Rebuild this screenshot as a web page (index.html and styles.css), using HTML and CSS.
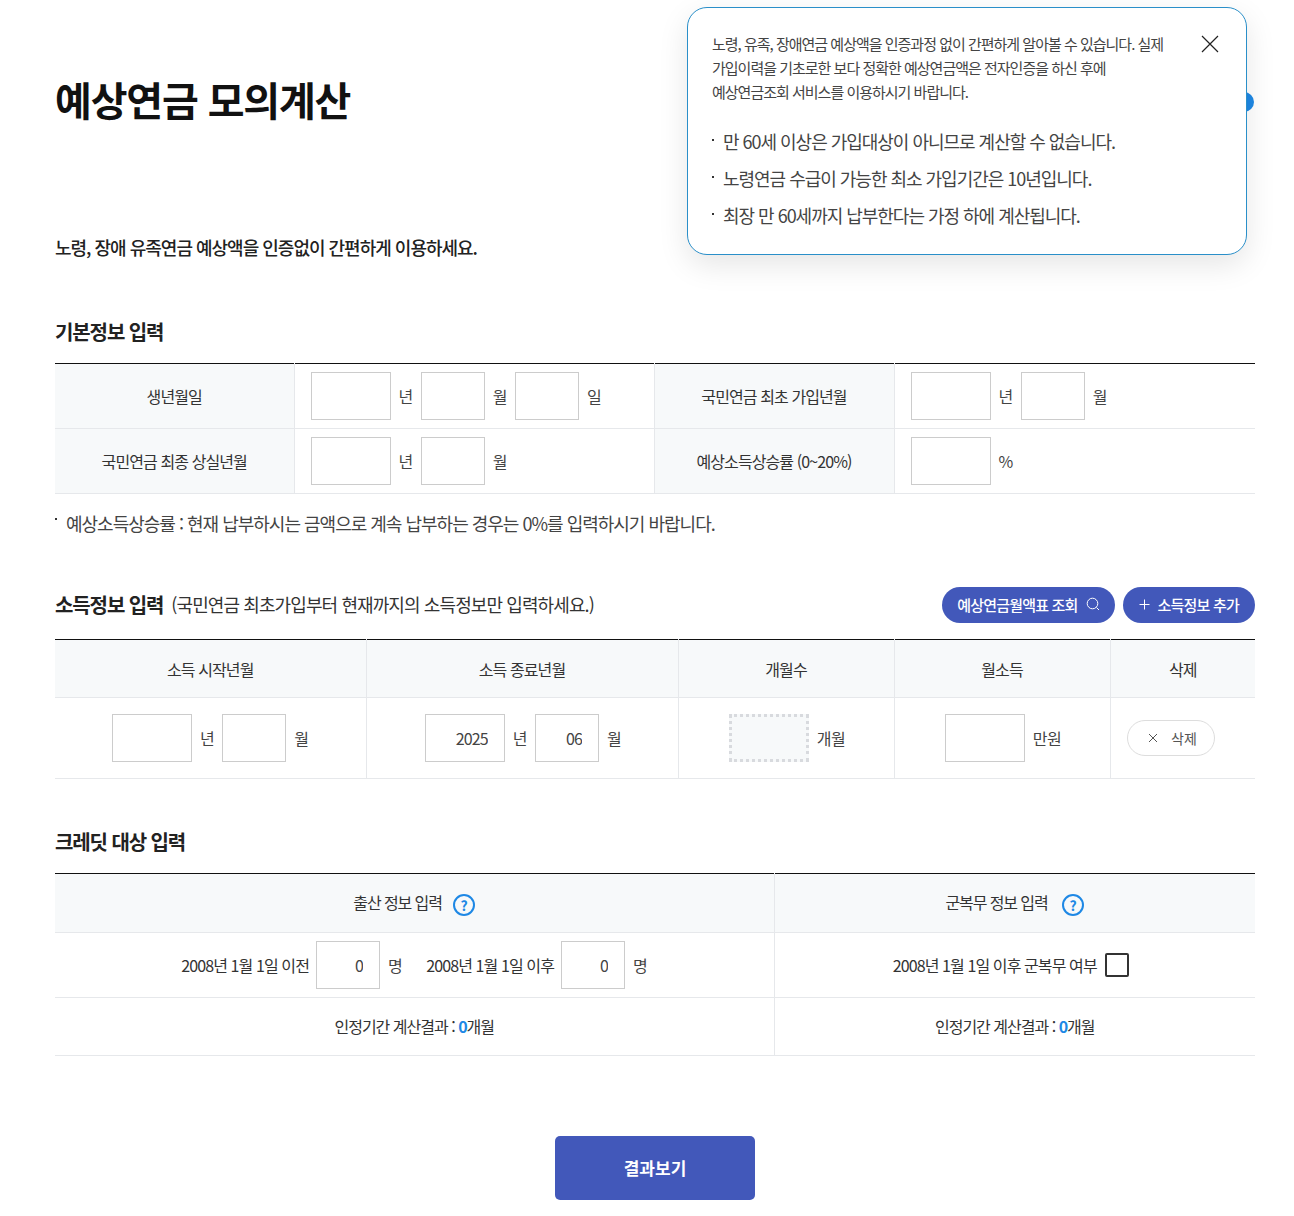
FILE: index.html
```html
<!DOCTYPE html>
<html lang="ko">
<head>
    <meta charset="UTF-8">
    <title>예상연금 모의계산</title>
    <link rel="stylesheet" href="styles.css">
</head>
<body>
    <div class="wrap">
        <h1>예상연금 모의계산</h1>
        <p class="lead">노령, 장애 유족연금 예상액을 인증없이 간편하게 이용하세요.</p>

        <!-- Popup -->
        <span class="popup-dot"></span>
        <div class="popup">
            <button class="popup-close" aria-label="닫기">
                <svg width="18" height="18" viewBox="0 0 18 18"><path d="M1 1L17 17M17 1L1 17" stroke="#222" stroke-width="1.2" fill="none"/></svg>
            </button>
            <p class="popup-text">노령, 유족, 장애연금 예상액을 인증과정 없이 간편하게 알아볼 수 있습니다. 실제<br>가입이력을 기초로한 보다 정확한 예상연금액은 전자인증을 하신 후에<br>예상연금조회 서비스를 이용하시기 바랍니다.</p>
            <ul class="popup-list">
                <li>만 60세 이상은 가입대상이 아니므로 계산할 수 없습니다.</li>
                <li>노령연금 수급이 가능한 최소 가입기간은 10년입니다.</li>
                <li>최장 만 60세까지 납부한다는 가정 하에 계산됩니다.</li>
            </ul>
        </div>

        <!-- Basic info -->
        <h2 class="basic-title">기본정보 입력</h2>
        <table class="form-table basic-table">
            <colgroup><col class="c239"><col class="c360"><col class="c240"><col></colgroup>
            <tr>
                <th>생년월일</th>
                <td class="fields"><input class="in-l"><span class="unit">년</span><input class="in-s"><span class="unit">월</span><input class="in-s"><span class="unit">일</span></td>
                <th>국민연금 최초 가입년월</th>
                <td class="fields"><input class="in-l"><span class="unit">년</span><input class="in-s"><span class="unit">월</span></td>
            </tr>
            <tr>
                <th>국민연금 최종 상실년월</th>
                <td class="fields"><input class="in-l"><span class="unit">년</span><input class="in-s"><span class="unit">월</span></td>
                <th>예상소득상승률 (0~20%)</th>
                <td class="fields"><input class="in-l"><span class="unit">%</span></td>
            </tr>
        </table>
        <p class="note">예상소득상승률 : 현재 납부하시는 금액으로 계속 납부하는 경우는 0%를 입력하시기 바랍니다.</p>

        <!-- Income info -->
        <div class="income-head">
            <h2>소득정보 입력</h2>
            <span class="income-sub">(국민연금 최초가입부터 현재까지의 소득정보만 입력하세요.)</span>
            <div class="income-btns">
                <button class="pill pill-search">예상연금월액표 조회
                    <svg width="14" height="14" viewBox="0 0 14 14"><circle cx="6.5" cy="6.5" r="5.3" stroke="#fff" fill="none"/><path d="M10.5 10.5L13 13" stroke="#fff" fill="none"/></svg>
                </button>
                <button class="pill">
                    <svg width="11" height="11" viewBox="0 0 11 11"><path d="M5.5 0.5V10.5M0.5 5.5H10.5" stroke="#fff" fill="none"/></svg>
                    소득정보 추가
                </button>
            </div>
        </div>
        <table class="form-table income-table">
            <colgroup><col class="c311"><col class="c312"><col class="c216"><col class="c216"><col></colgroup>
            <tr class="head-row">
                <th>소득 시작년월</th>
                <th>소득 종료년월</th>
                <th>개월수</th>
                <th>월소득</th>
                <th>삭제</th>
            </tr>
            <tr class="data-row">
                <td><input class="in-l"><span class="unit">년</span><input class="in-s"><span class="unit">월</span></td>
                <td><input class="in-l" value="2025"><span class="unit">년</span><input class="in-s" value="06"><span class="unit">월</span></td>
                <td><input class="in-l in-dotted" disabled><span class="unit">개월</span></td>
                <td><input class="in-l"><span class="unit">만원</span></td>
                <td class="del-cell">
                    <button class="del-btn">
                        <svg width="10" height="10" viewBox="0 0 10 10"><path d="M1 1L9 9M9 1L1 9" stroke="#555" fill="none"/></svg>
                        삭제
                    </button>
                </td>
            </tr>
        </table>

        <!-- Credit -->
        <h2 class="credit-title">크레딧 대상 입력</h2>
        <table class="form-table credit-table">
            <colgroup><col class="c719"><col></colgroup>
            <tr class="credit-head">
                <th>출산 정보 입력 <span class="help">?</span></th>
                <th>군복무 정보 입력 <span class="help help-wide">?</span></th>
            </tr>
            <tr class="credit-row">
                <td>
                    <div class="credit-line">
                        <span>2008년 1월 1일 이전</span><input class="in-s" value="0"><span class="unit">명</span>
                        <span class="after">2008년 1월 1일 이후</span><input class="in-s" value="0"><span class="unit">명</span>
                    </div>
                </td>
                <td>
                    <div class="credit-line">
                        <span>2008년 1월 1일 이후 군복무 여부</span><span class="check"></span>
                    </div>
                </td>
            </tr>
            <tr class="credit-result">
                <td>인정기간 계산결과 : <b>0</b>개월</td>
                <td>인정기간 계산결과 : <b>0</b>개월</td>
            </tr>
        </table>

        <div class="submit-wrap">
            <button class="submit">결과보기</button>
        </div>
    </div>
</body>
</html>
```

FILE: styles.css
```css
/* General styles */
* {
    box-sizing: border-box;
}

body {
    margin: 0;
    background-color: #fff;
    color: #333;
    font-family: "Noto Sans CJK KR", "Noto Sans", sans-serif;
    font-size: 16px;
    letter-spacing: -0.9px;
}

.wrap {
    position: relative;
    width: 1200px;
    height: 1216px;
    margin-left: 55px;
    padding-top: 70px;
}

h1 {
    margin: 0;
    font-size: 40px;
    line-height: 58px;
    font-weight: 700;
    color: #111;
    letter-spacing: -1.15px;
}

h2 {
    margin: 0;
    font-size: 20px;
    line-height: 30px;
    font-weight: 700;
    color: #222;
    letter-spacing: -1.1px;
}

.lead {
    margin: 105px 0 0;
    font-size: 18px;
    line-height: 28px;
    font-weight: 500;
    color: #222;
    letter-spacing: -1px;
}

/* Popup */
.popup {
    position: absolute;
    top: 7px;
    left: 632px;
    width: 560px;
    height: 248px;
    padding: 24px 24px;
    background-color: #fff;
    border: 1px solid #2a8fc9;
    border-radius: 20px;
    box-shadow: 0 10px 30px rgba(0, 0, 0, 0.1);
}

.popup-dot {
    position: absolute;
    top: 92px;
    left: 1179px;
    width: 20px;
    height: 20px;
    border-radius: 50%;
    background-color: #1e88e5;
}

.popup-close {
    position: absolute;
    top: 27px;
    right: 27px;
    padding: 0;
    border: none;
    background: none;
    line-height: 0;
}

.popup-text {
    margin: 0;
    font-size: 15px;
    line-height: 24px;
    color: #444;
    letter-spacing: -1px;
}

.popup-list {
    margin: 19px 0 0;
    padding: 0;
    list-style: none;
    font-size: 18px;
    line-height: 37px;
    color: #444;
    letter-spacing: -1.02px;
}

.popup-list li,
.note {
    position: relative;
    padding-left: 11px;
}

.popup-list li::before,
.note::before {
    content: "";
    position: absolute;
    left: 0;
    top: 16px;
    width: 2px;
    height: 2px;
    background-color: #333;
}

.note::before {
    top: 10px;
}

/* Tables */
.form-table {
    width: 100%;
    border-collapse: collapse;
    table-layout: fixed;
    border-top: 1px solid #111;
}

.form-table th,
.form-table td {
    padding: 0;
    text-align: center;
    font-weight: 400;
    border-bottom: 1px solid #e6e8eb;
    border-left: 1px solid #e6e8eb;
}

.form-table th:first-child,
.form-table td:first-child {
    border-left: none;
}

.form-table th {
    background-color: #f7f9fa;
}

.c239 { width: 239px; }
.c240 { width: 240px; }
.c360 { width: 360px; }
.c311 { width: 311px; }
.c312 { width: 312px; }
.c216 { width: 216px; }
.c719 { width: 719px; }

input {
    height: 48px;
    padding: 0 16px;
    border: 1px solid #ccc;
    background-color: #fff;
    color: #444;
    font: inherit;
    letter-spacing: inherit;
    text-align: right;
    vertical-align: middle;
}

.in-l { width: 80px; }
.in-s { width: 64px; }

.in-dotted {
    border: 3px dotted #d8dade;
    background-color: #f7f9fa;
}

.unit {
    display: inline-block;
    margin: 0 8px;
    vertical-align: middle;
    color: #444;
    letter-spacing: -0.5px;
}

.unit:last-child {
    margin-right: 0;
}

.basic-title {
    margin-top: 56px;
    margin-bottom: 16px;
}

.basic-table tr {
    height: 65px;
}

.fields {
    padding-left: 16px !important;
    text-align: left !important;
}

.note {
    margin: 14px 0 0;
    line-height: 30px;
    font-size: 18px;
    color: #444;
    letter-spacing: -1px;
}

/* Income */
.income-head {
    display: flex;
    align-items: center;
    margin-top: 49px;
    margin-bottom: 16px;
}

.income-sub {
    margin-left: 8px;
    margin-bottom: 2px;
    font-size: 18px;
    color: #333;
}

.income-btns {
    display: flex;
    gap: 8px;
    margin-left: auto;
}

.pill {
    display: flex;
    align-items: center;
    gap: 8px;
    height: 36px;
    padding: 0 16px 2px;
    border: none;
    border-radius: 18px;
    background-color: #4258ba;
    color: #fff;
    font: inherit;
    font-size: 15px;
    font-weight: 500;
    letter-spacing: -0.8px;
}

.pill-search {
    padding: 0 15px 2px;
}

.head-row {
    height: 58px;
}

.data-row {
    height: 81px;
}

.data-row td + td {
    padding-left: 2px;
}

.del-cell {
    padding-left: 16px !important;
    text-align: left !important;
}

.del-btn {
    display: inline-flex;
    align-items: center;
    justify-content: center;
    gap: 13px;
    width: 88px;
    height: 36px;
    padding: 0 0 0 4px;
    border: 1px solid #ddd;
    border-radius: 18px;
    background-color: #fff;
    color: #555;
    font: inherit;
    font-size: 14px;
    vertical-align: middle;
}

/* Credit */
.credit-title {
    margin-top: 48px;
    margin-bottom: 16px;
}

.credit-head {
    height: 59px;
}

.credit-head th {
    letter-spacing: -1.1px;
}

.credit-row {
    height: 65px;
}

.credit-line {
    display: flex;
    align-items: center;
    justify-content: center;
}

.credit-result {
    height: 58px;
    letter-spacing: -1px;
}

.credit-result td {
    padding-bottom: 2px;
}

.help {
    display: inline-block;
    width: 22px;
    height: 22px;
    margin-left: 8px;
    border: 2px solid #1e88e5;
    border-radius: 50%;
    color: #1e88e5;
    font-size: 14px;
    font-weight: 700;
    line-height: 18px;
    letter-spacing: 0;
    vertical-align: middle;
}

.help-wide {
    margin-left: 11px;
}

.after {
    margin-left: 16px;
}

.credit-line input {
    margin-left: 7px;
}

.check {
    display: inline-block;
    width: 24px;
    height: 24px;
    margin: 0 8px;
    border: 2px solid #333;
    border-radius: 2px;
}

.credit-result b {
    color: #1e88e5;
    font-weight: 700;
}

/* Submit */
.submit-wrap {
    display: flex;
    justify-content: center;
    margin-top: 80px;
}

.submit {
    width: 200px;
    height: 64px;
    padding: 0 0 2px;
    border: none;
    border-radius: 5px;
    background-color: #4258ba;
    color: #fff;
    font: inherit;
    font-size: 17px;
    font-weight: 700;
}
```
